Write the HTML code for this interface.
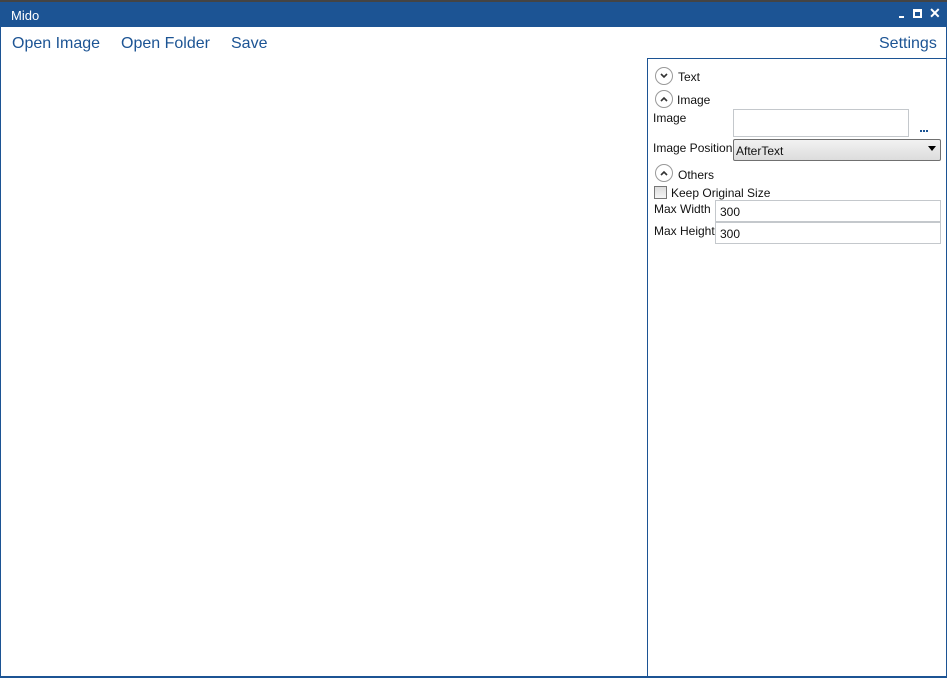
<!DOCTYPE html>
<html><head><meta charset="utf-8"><style>
*{margin:0;padding:0;box-sizing:border-box}
body{width:947px;height:678px;background:#fff;position:relative;overflow:hidden;font-family:"Liberation Sans",sans-serif}
.a{position:absolute}
.t{font-size:12px;color:#111}
.circ{position:absolute;width:18px;height:18px;border:1px solid #999;border-radius:50%;background:#fff}
.circ svg{position:absolute;left:4px;top:5px}
.box{position:absolute;border:1px solid #c4c8cc;background:#fff}
</style></head><body>
<div class="a" style="left:0;top:0;width:947px;height:2px;background:#444"></div>
<div class="a" style="left:0;top:2px;width:947px;height:25px;background:#1c5494"></div>
<div class="a" style="left:11px;top:8px;color:#fff;font-size:13px">Mido</div>
<div class="a" style="left:899px;top:16px;width:5px;height:2px;background:#fff"></div>
<div class="a" style="left:913px;top:9px;width:9px;height:9px;border:2px solid #fff;border-top-width:3px"></div>
<div class="a" style="left:929px;top:5px;color:#fff;font-size:14px;font-weight:bold">✕</div>
<div class="a" style="left:0;top:27px;width:1px;height:651px;background:#1c5494"></div>
<div class="a" style="left:946px;top:27px;width:1px;height:651px;background:#1c5494"></div>
<div class="a" style="left:0;top:676px;width:947px;height:2px;background:#1c5494"></div>
<div class="a" style="left:12px;top:35px;color:#1c5494;font-size:16px">Open Image</div>
<div class="a" style="left:121px;top:35px;color:#1c5494;font-size:16px">Open Folder</div>
<div class="a" style="left:231px;top:35px;color:#1c5494;font-size:16px">Save</div>
<div class="a" style="left:879px;top:35px;color:#1c5494;font-size:16px">Settings</div>
<div class="a" style="left:647px;top:58px;width:300px;height:620px;border:1px solid #1c5494;border-right:none"></div>
<div class="circ" style="left:655px;top:67px"><svg width="8" height="6"><path d="M1 1L4 4L7 1" stroke="#333" stroke-width="1.6" fill="none"/></svg></div>
<div class="a t" style="left:678px;top:70px">Text</div>
<div class="circ" style="left:655px;top:90px"><svg width="8" height="6"><path d="M1 5L4 2L7 5" stroke="#333" stroke-width="1.6" fill="none"/></svg></div>
<div class="a t" style="left:677px;top:93px">Image</div>
<div class="a t" style="left:653px;top:111px">Image</div>
<div class="box" style="left:733px;top:109px;width:176px;height:28px"></div>
<div class="a" style="left:920px;top:130px;width:2px;height:2px;background:#1c5494;box-shadow:3px 0 #1c5494,6px 0 #1c5494"></div>
<div class="a t" style="left:653px;top:141px">Image Position</div>
<div class="a" style="left:733px;top:139px;width:208px;height:22px;border:1px solid #707070;border-radius:2px;background:linear-gradient(#f2f2f2,#dcdcdc)"></div>
<div class="a t" style="left:736px;top:144px">AfterText</div>
<div class="a" style="left:928px;top:146px;width:0;height:0;border-left:4px solid transparent;border-right:4px solid transparent;border-top:5px solid #000"></div>
<div class="circ" style="left:655px;top:164px"><svg width="8" height="6"><path d="M1 5L4 2L7 5" stroke="#333" stroke-width="1.6" fill="none"/></svg></div>
<div class="a t" style="left:678px;top:168px">Others</div>
<div class="a" style="left:654px;top:186px;width:13px;height:13px;border:1px solid #777;background:linear-gradient(#ddd,#f5f5f5)"></div>
<div class="a t" style="left:671px;top:186px">Keep Original Size</div>
<div class="a t" style="left:654px;top:202px">Max Width</div>
<div class="box" style="left:715px;top:200px;width:226px;height:22px"></div>
<div class="a t" style="left:720px;top:205px">300</div>
<div class="a t" style="left:654px;top:224px">Max Height</div>
<div class="box" style="left:715px;top:222px;width:226px;height:22px"></div>
<div class="a t" style="left:720px;top:227px">300</div>
</body></html>
